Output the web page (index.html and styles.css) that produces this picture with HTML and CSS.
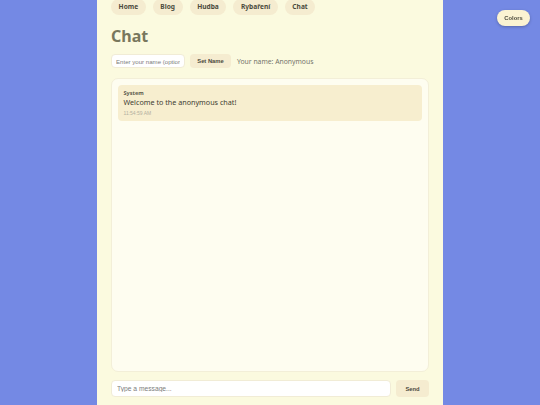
FILE: index.html
```html
<!DOCTYPE html>
<html lang="en">
<head>
<meta charset="utf-8">
<title>Chat</title>
<link rel="stylesheet" href="styles.css">
</head>
<body>
<div class="page">
  <nav class="nav">
    <a class="pill" href="#">Home</a>
    <a class="pill" href="#">Blog</a>
    <a class="pill" href="#">Hudba</a>
    <a class="pill" href="#">Rybaření</a>
    <a class="pill" href="#">Chat</a>
  </nav>
  <h1 class="title">Chat</h1>
  <div class="name-row">
    <input class="name-input" type="text" placeholder="Enter your name (optional)">
    <button class="btn set-btn">Set Name</button>
    <span class="your-name">Your name: Anonymous</span>
  </div>
  <div class="chat-box">
    <div class="msg">
      <div class="msg-author">System</div>
      <div class="msg-text">Welcome to the anonymous chat!</div>
      <div class="msg-time">11:54:59 AM</div>
    </div>
  </div>
  <div class="send-row">
    <input class="msg-input" type="text" placeholder="Type a message...">
    <button class="btn send-btn">Send</button>
  </div>
</div>
<button class="btn colors-btn">Colors</button>
</body>
</html>
```
FILE: styles.css
```css
html, body {
  margin: 0;
  padding: 0;
}
body {
  background: #7489e4;
  font-family: "Noto Sans", "Open Sans", sans-serif;
  min-height: 405px;
  overflow: hidden;
}
.page {
  width: 346px;
  margin: 0 auto;
  padding: 0 14px;
  box-sizing: border-box;
  background: #fbfadf;
  min-height: 420px;
}
.nav {
  display: flex;
  gap: 7px;
  margin-top: -1px;
}
.pill {
  display: block;
  height: 16px;
  line-height: 16px;
  padding: 0 7.6px;
  border-radius: 8px;
  background: #f5ecd0;
  color: #4b4a3c;
  font-weight: 700;
  font-size: 6.6px;
  text-decoration: none;
}
.title {
  margin: 11px 0 0;
  font-size: 16px;
  line-height: 20px;
  font-weight: 700;
  color: #78775d;
}
.name-row {
  display: flex;
  align-items: center;
  margin-top: 8px;
  height: 14px;
}
.name-input {
  width: 74px;
  height: 14px;
  box-sizing: border-box;
  border: 1px solid #f1ecd6;
  border-radius: 4px;
  background: #ffffff;
  padding: 0 4px;
  font-family: "Liberation Sans", Arial, sans-serif;
  font-size: 6.1px;
  outline: none;
}
.name-input::placeholder,
.msg-input::placeholder {
  color: #7d7d7d;
}
.btn {
  border: none;
  background: #f5ecd0;
  color: #4b4a3c;
  font-family: "Liberation Sans", Arial, sans-serif;
  font-weight: 700;
  font-size: 5.8px;
  padding: 0;
  cursor: pointer;
}
.set-btn {
  width: 41px;
  height: 14px;
  border-radius: 4px;
  margin-left: 5px;
}
.your-name {
  margin-left: 6px;
  font-size: 6.8px;
  color: #74736a;
}
.chat-box {
  margin-top: 10px;
  height: 294px;
  box-sizing: border-box;
  padding: 6px;
  background: #fefdf0;
  border: 1px solid #f3efd8;
  border-radius: 7px;
}
.msg {
  background: #f7eecf;
  border-radius: 4px;
  padding: 4px 5.5px 4px;
  height: 36px;
  box-sizing: border-box;
}
.msg-author {
  font-size: 5.6px;
  font-weight: 700;
  color: #5e5d4f;
  line-height: 8px;
}
.msg-text {
  font-size: 7.2px;
  color: #3d3c32;
  line-height: 11px;
}
.msg-time {
  font-family: "Liberation Sans", Arial, sans-serif;
  font-size: 5px;
  color: #b3b0a0;
  line-height: 10px;
}
.send-row {
  display: flex;
  gap: 5px;
  margin-top: 8px;
}
.msg-input {
  flex: 1;
  height: 17px;
  box-sizing: border-box;
  border: 1px solid #f1ecd6;
  border-radius: 4px;
  background: #ffffff;
  padding: 0 5px;
  font-family: "Liberation Sans", Arial, sans-serif;
  font-size: 6.7px;
  outline: none;
}
.send-btn {
  width: 33px;
  height: 17px;
  border-radius: 4px;
}
.colors-btn {
  position: fixed;
  top: 10px;
  right: 10px;
  width: 33px;
  height: 16px;
  border-radius: 8px;
  background: #fbf3d2;
  box-shadow: 0 1px 3px rgba(0, 0, 0, 0.25);
}
```
